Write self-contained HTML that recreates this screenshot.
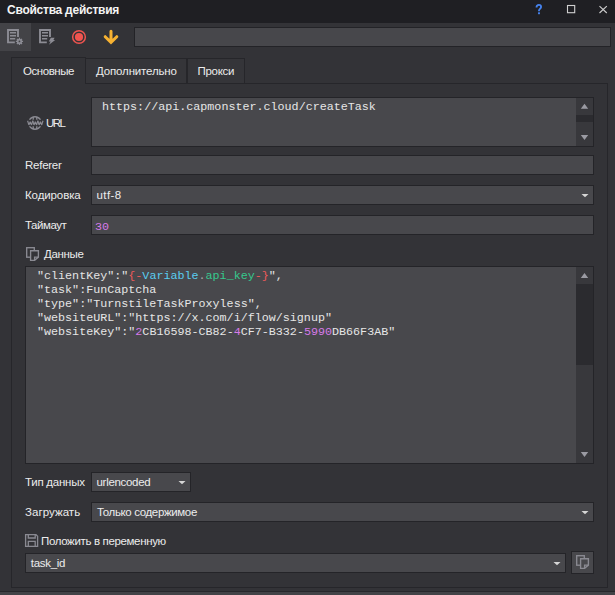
<!DOCTYPE html>
<html><head><meta charset="utf-8">
<style>
*{margin:0;padding:0;box-sizing:border-box}
html,body{width:615px;height:595px;overflow:hidden;background:#333337;font-family:"Liberation Sans",sans-serif;font-size:11.5px;letter-spacing:-0.2px;color:#ececec}
div,span,svg{position:absolute}
.t{line-height:14px;white-space:nowrap}
.inp{background:#48484c;border:1px solid #242428}
.mono{font-family:"Liberation Mono",monospace;font-size:11.71px;letter-spacing:0;line-height:14px;white-space:pre;color:#e6e6e6}
.tab{border:1px solid #26262a}
.sb{background:#38383c}
.thumb{background:#2b2b2f}
.w{color:#e4e4e4}
.r{color:#ee5a5a}.c{color:#5acdf0}.g{color:#36c98e}.d{color:#a8a8a8}.p{color:#d67ae8}
</style></head><body>
<!-- title bar -->
<div style="left:0;top:0;width:615px;height:23px;background:#1f1f23"></div>
<div class="t" style="left:7px;top:2.5px;font-weight:bold;font-size:12px;letter-spacing:-0.25px;color:#f4f4f4">Свойства действия</div>
<svg style="left:530px;top:0" width="85" height="22" viewBox="0 0 85 22">
  <path d="M6.5 7.6 C6.5 5.8 7.7 4.9 9 4.9 C10.3 4.9 11.1 5.8 11.1 7 C11.1 8.6 9 9.2 9 10.5 V11.3" fill="none" stroke="#4684f0" stroke-width="1.8"/><rect x="8.05" y="12.3" width="1.9" height="1.9" fill="#4684f0"/>
  <rect x="37.5" y="5.5" width="7.2" height="7.2" fill="none" stroke="#d0d0d0" stroke-width="1.1"/>
  <path d="M69.5 6.2 L76.8 13 M76.8 6.2 L69.5 13" stroke="#cccccc" stroke-width="1.15"/>
</svg>
<!-- toolbar -->
<div style="left:0;top:23px;width:31px;height:28px;background:#434347"></div>
<svg style="left:0;top:22px" width="130" height="30" viewBox="0 0 130 30">
  <g fill="none" stroke="#8c8c94" stroke-width="1.9">
    <path d="M18 15 V8 H8 V20.4 H14.8"/>
    <path d="M50 15 V8 H40 V20.4 H46.8"/>
  </g>
  <g stroke="#8c8c94" stroke-width="1.4">
    <path d="M10 10.8 H16 M10 13.8 H16 M10 16.8 H15.2"/>
    <path d="M42 10.8 H48 M42 13.8 H48 M42 16.8 H47.2"/>
  </g>
  <g transform="translate(19.45 19.45)" fill="#8c8c94">
    <circle r="2.6"/>
    <path d="M-0.65 -3.6 H0.65 V3.6 H-0.65Z M-3.6 -0.65 V0.65 H3.6 V-0.65Z"/>
    <path d="M-0.65 -3.6 H0.65 V3.6 H-0.65Z M-3.6 -0.65 V0.65 H3.6 V-0.65Z" transform="rotate(45)"/>
    <circle r="0.9" fill="#434347"/>
  </g>
  <path d="M50.8 15.8 L54.6 15.8 L53.4 18 L55.2 18 L49 22.8 L50.6 19.6 L48.8 19.6 Z" fill="#8c8c94"/>
  <circle cx="79" cy="15" r="6.35" fill="none" stroke="#f0544f" stroke-width="1.5"/>
  <circle cx="79" cy="15" r="4.1" fill="#f0544f"/>
  <path d="M111 9.3 V19.5 M105.2 14.7 L111 20.4 L116.8 14.7" fill="none" stroke="#f7b232" stroke-width="3" stroke-linecap="round" stroke-linejoin="miter"/>
</svg>
<div class="inp" style="left:134px;top:27px;width:477px;height:20px;background:#47474b;border-color:#232327"></div>

<!-- tabs -->
<div class="tab" style="left:85px;top:58px;width:102px;height:26px;background:#353539"></div>
<div class="tab" style="left:187px;top:58px;width:58px;height:26px;background:#353539"></div>
<div style="left:11px;top:83px;width:597px;height:505px;border:1px solid #26262a"></div>
<div class="tab" style="left:11px;top:57px;width:75px;height:27px;background:#333337;border-bottom:none"></div>
<div class="t" style="left:23px;top:64px;letter-spacing:-0.45px">Основные</div>
<div class="t" style="left:96px;top:64px;letter-spacing:-0.15px">Дополнительно</div>
<div class="t" style="left:197.5px;top:64px;letter-spacing:-0.3px">Прокси</div>

<!-- URL -->
<svg style="left:26px;top:114px" width="18" height="18" viewBox="0 0 18 18">
  <g fill="#8a8a92">
    <path d="M2.83 5.7 A7 7 0 0 1 15.17 5.7 L13.52 5.7 A5.6 5.6 0 0 0 4.48 5.7 Z"/>
    <path d="M2.83 12.3 A7 7 0 0 0 15.17 12.3 L13.52 12.3 A5.6 5.6 0 0 1 4.48 12.3 Z"/>
    <rect x="6.5" y="3" width="1.4" height="2.7"/><rect x="10.1" y="3" width="1.4" height="2.7"/>
    <rect x="6.5" y="12.3" width="1.4" height="2.7"/><rect x="10.1" y="12.3" width="1.4" height="2.7"/>
  </g>
  <g fill="none" stroke="#8a8a92" stroke-width="1.2" stroke-linejoin="bevel">
    <path d="M1.6 6.8 L2.9 10.9 L4.2 7.8 L5.5 10.9 L6.8 6.8"/>
    <path d="M6.7 6.8 L8 10.9 L9.3 7.8 L10.6 10.9 L11.9 6.8"/>
    <path d="M11.8 6.8 L13.1 10.9 L14.4 7.8 L15.7 10.9 L17 6.8"/>
  </g>
</svg>
<div class="t" style="left:46px;top:116px;letter-spacing:-1.5px">URL</div>
<div class="inp" style="left:91px;top:97px;width:503px;height:50px"></div>
<div class="mono" style="left:102px;top:100px">https://api.capmonster.cloud/createTask</div>
<div class="sb" style="left:576px;top:98px;width:17px;height:48px"></div>
<div class="thumb" style="left:576px;top:115px;width:17px;height:7px"></div>
<svg style="left:576px;top:98px" width="17" height="48" viewBox="0 0 17 48">
  <path d="M4.8 10.8 L12.2 10.8 L8.5 5.8Z M4.8 37 L12.2 37 L8.5 42Z" fill="#9a9aa2"/>
</svg>

<!-- Referer -->
<div class="t" style="left:25px;top:158px;letter-spacing:-0.25px">Referer</div>
<div class="inp" style="left:91px;top:155px;width:503px;height:20px"></div>

<!-- Кодировка -->
<div class="t" style="left:25px;top:188px;letter-spacing:-0.1px">Кодировка</div>
<div class="inp" style="left:91px;top:185px;width:503px;height:20px"></div>
<div class="t" style="left:96.5px;top:188px;letter-spacing:0.4px">utf-8</div>
<svg style="left:578px;top:190px" width="12" height="10" viewBox="0 0 12 10"><path d="M3.5 4 H10.5 L7 7.3Z" fill="#d6d6d6"/></svg>

<!-- Таймаут -->
<div class="t" style="left:25px;top:218px;letter-spacing:-0.45px">Таймаут</div>
<div class="inp" style="left:91px;top:215px;width:503px;height:20px"></div>
<div class="mono p" style="left:95px;top:219.5px">30</div>

<!-- Данные -->
<svg style="left:24px;top:245px" width="18" height="18" viewBox="0 0 18 18">
  <g stroke="#8a8a92" stroke-width="1.35">
    <rect x="2.7" y="2.7" width="7.6" height="9.5" fill="none"/>
    <path d="M6.6 5.7 H14.4 V12.1 L10.6 15.3 H6.6 Z" fill="#333337"/>
    <path d="M14.4 12.1 H10.6 V15.3" fill="none"/>
  </g>
</svg>
<div class="t" style="left:44px;top:247px;letter-spacing:-0.35px">Данные</div>
<div class="inp" style="left:25px;top:266px;width:569px;height:198px"></div>
<div class="mono" style="left:37px;top:269px"><span class="w" style="position:static">"clientKey":"</span><span class="r" style="position:static">{-</span><span class="c" style="position:static">Variable</span><span class="d" style="position:static">.</span><span class="g" style="position:static">api_key</span><span class="r" style="position:static">-}</span><span class="w" style="position:static">",</span>
"task":FunCaptcha
"type":"TurnstileTaskProxyless",
"websiteURL":"https://x.com/i/flow/signup"
"websiteKey":"<span class="p" style="position:static">2</span>CB16598-CB82-<span class="p" style="position:static">4</span>CF7-B332-<span class="p" style="position:static">5990</span>DB66F3AB"</div>
<div class="sb" style="left:576px;top:267px;width:17px;height:196px"></div>
<div class="thumb" style="left:576px;top:284px;width:17px;height:81px"></div>
<svg style="left:576px;top:267px" width="17" height="196" viewBox="0 0 17 196">
  <path d="M4.8 11 L12.2 11 L8.5 6Z M4.8 185 L12.2 185 L8.5 190Z" fill="#9a9aa2"/>
</svg>

<!-- Тип данных -->
<div class="t" style="left:25px;top:475px;letter-spacing:-0.25px">Тип данных</div>
<div class="inp" style="left:91px;top:472px;width:100px;height:20px"></div>
<div class="t" style="left:96.5px;top:475px;letter-spacing:-0.3px">urlencoded</div>
<svg style="left:175px;top:477px" width="12" height="10" viewBox="0 0 12 10"><path d="M3.5 4 H10.5 L7 7.3Z" fill="#d6d6d6"/></svg>

<!-- Загружать -->
<div class="t" style="left:25px;top:505px;letter-spacing:0.05px">Загружать</div>
<div class="inp" style="left:91px;top:502px;width:503px;height:20px"></div>
<div class="t" style="left:97px;top:505px;letter-spacing:-0.36px">Только содержимое</div>
<svg style="left:578px;top:507px" width="12" height="10" viewBox="0 0 12 10"><path d="M3.5 4 H10.5 L7 7.3Z" fill="#d6d6d6"/></svg>

<!-- Положить -->
<svg style="left:24px;top:533px" width="16" height="16" viewBox="0 0 16 16">
  <g fill="none" stroke="#8a8a92" stroke-width="1.3">
    <path d="M1.6 1.6 H12 L13.6 3.2 V13.4 H1.6 Z"/>
    <path d="M4.3 1.6 V5 H11.2 V1.6"/>
    <path d="M4.3 13.4 V8.3 H11.2 V13.4"/>
  </g>
</svg>
<div class="t" style="left:41px;top:534px;letter-spacing:-0.35px">Положить в переменную</div>
<div class="inp" style="left:25px;top:553px;width:541px;height:20px"></div>
<div class="t" style="left:30.8px;top:556px;letter-spacing:-0.3px">task_id</div>
<svg style="left:550px;top:558px" width="12" height="10" viewBox="0 0 12 10"><path d="M3.5 4 H10.5 L7 7.3Z" fill="#d6d6d6"/></svg>
<div class="inp" style="left:571px;top:551px;width:23px;height:23px"></div>
<svg style="left:574px;top:553px" width="18" height="18" viewBox="0 0 18 18">
  <g stroke="#8a8a92" stroke-width="1.35">
    <rect x="2.7" y="2.7" width="7.6" height="9.5" fill="none"/>
    <path d="M6.6 5.7 H14.4 V12.1 L10.6 15.3 H6.6 Z" fill="#48484c"/>
    <path d="M14.4 12.1 H10.6 V15.3" fill="none"/>
  </g>
</svg>

<!-- bottom strip -->
<div style="left:0;top:591px;width:615px;height:1px;background:#27272b"></div>
<div style="left:0;top:592px;width:615px;height:3px;background:#434347"></div>
</body></html>
